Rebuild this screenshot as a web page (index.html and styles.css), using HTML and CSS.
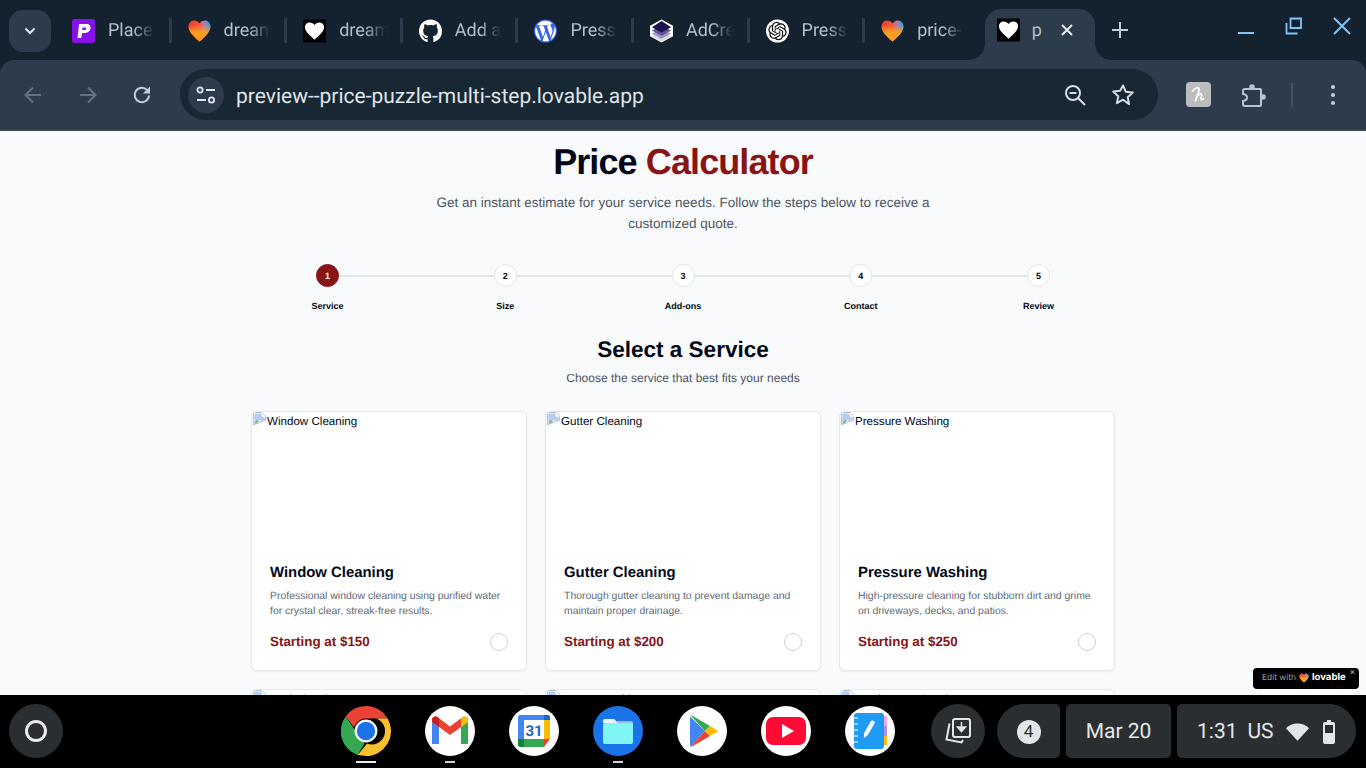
FILE: index.html
```html
<!DOCTYPE html>
<html lang="en">
<head>
<meta charset="utf-8">
<title>Price Calculator</title>
<link rel="stylesheet" href="styles.css">
</head>
<body>
<svg class="defs" width="0" height="0" aria-hidden="true">
  <defs>
    <linearGradient id="lg" x1="0" y1="0" x2="1" y2="0">
      <stop offset="0" stop-color="#ee3a2a"/><stop offset=".5" stop-color="#f2553f"/><stop offset=".72" stop-color="#b57ab8"/><stop offset="1" stop-color="#1fa5dc"/>
    </linearGradient>
    <linearGradient id="lg2" x1="0.5" y1="0" x2="0.5" y2="1">
      <stop offset=".2" stop-color="#f8a020" stop-opacity="0"/><stop offset=".55" stop-color="#f8a020" stop-opacity=".95"/><stop offset="1" stop-color="#fb9a1e"/>
    </linearGradient>
    <symbol id="heart" viewBox="0 0 24 24">
      <path fill="url(#lg)" d="M6.500 1C3 1 .5 3.800.5 7.200c0 4.600 4 9.400 11.500 15.800C19.500 16.600 23.500 11.800 23.500 7.200 23.500 3.800 21 1 17.500 1 15.200 1 13.200 2.200 12 4.100 10.800 2.200 8.800 1 6.500 1Z"/>
      <path fill="url(#lg2)" d="M6.500 1C3 1 .5 3.800.5 7.200c0 4.600 4 9.400 11.500 15.800C19.500 16.600 23.500 11.800 23.500 7.200 23.500 3.800 21 1 17.500 1 15.200 1 13.200 2.200 12 4.100 10.800 2.200 8.800 1 6.500 1Z"/>
    </symbol>
    <symbol id="bwheart" viewBox="0 0 24 24">
      <rect width="24" height="24" fill="#000"/>
      <path fill="#fff" d="M7 3C3.800 3 2 5.300 2 8.200c0 4 4 7.800 10 12.800 6-5 10-8.800 10-12.800C22 5.300 20.200 3 17 3c-2.100 0-3.900 1-5 2.800C10.900 4 9.100 3 7 3Z"/>
    </symbol>
    <symbol id="broken" viewBox="0 0 16 16">
      <path fill="#fff" stroke="#b4b7bc" stroke-width="1" d="M1.500.5h9l4 4v4.500l-5 1-3 2-5 1.500Z"/>
      <path fill="#b3cdf3" d="M2.500 1.500h7.500l.5 3.500 3.200.5v3l-4 1-1.500-1-3 2-2.700.5Z"/>
      <path fill="#7fb36f" d="M2.500 11.500l3-3 2 1.500-3 2-2 .5Z"/>
    </symbol>
  </defs>
</svg>

<header class="browser">
  <div class="tabstrip">
    <div class="tab-search">
      <svg class="chev" viewBox="0 0 12 8" width="12" height="8"><path d="M1.500 1.500 6 6l4.500-4.500" fill="none" stroke="#e3e8ee" stroke-width="2"/></svg>
    </div>
    <div class="tab">
      <svg class="fav" viewBox="0 0 23 24"><rect width="23" height="24" rx="3" fill="#8711e6"/><path fill="#fff" d="M7 5h7.500c3 0 4.500 1.800 4 4.500-.5 2.900-2.800 4.500-5.800 4.500h-2.500l-1 5H5.500L7 5Zm3.700 3.500-.6 2.500h2.300c1 0 1.700-.4 1.900-1.300.1-.8-.4-1.200-1.300-1.200h-2.300Z"/></svg>
      <span class="tab-title">Place</span>
    </div>
    <div class="tab">
      <svg class="fav"><use href="#heart"/></svg>
      <span class="tab-title">dream</span>
    </div>
    <div class="tab">
      <svg class="fav"><use href="#bwheart"/></svg>
      <span class="tab-title">dream</span>
    </div>
    <div class="tab">
      <svg class="fav" viewBox="0 0 16 16"><path fill="#fff" d="M8 0C3.580 0 0 3.580 0 8c0 3.540 2.290 6.530 5.470 7.590.4.070.55-.17.55-.38 0-.19-.01-.82-.01-1.490-2.010.37-2.530-.49-2.690-.94-.09-.23-.48-.94-.82-1.130-.28-.15-.68-.52-.01-.53.630-.01 1.080.58 1.230.82.720 1.210 1.870.87 2.330.66.070-.52.280-.87.510-1.070-1.780-.2-3.640-.89-3.640-3.950 0-.87.310-1.590.82-2.150-.08-.2-.36-1.020.08-2.120 0 0 .67-.21 2.200.82.640-.18 1.320-.27 2-.27s1.360.09 2 .27c1.530-1.040 2.200-.82 2.200-.82.440 1.100.160 1.920.08 2.120.510.560.820 1.270.820 2.150 0 3.070-1.870 3.750-3.650 3.950.290.250.540.730.540 1.480 0 1.070-.010 1.930-.010 2.200 0 .210.150.460.550.380A8.010 8.010 0 0 0 16 8c0-4.420-3.580-8-8-8Z"/></svg>
      <span class="tab-title">Add a</span>
    </div>
    <div class="tab">
      <svg class="fav" viewBox="0 0 24 24"><circle cx="12" cy="12" r="12" fill="#3a66e0"/><path fill="#fff" d="M21.469 6.825c.84 1.537 1.318 3.3 1.318 5.175 0 3.979-2.156 7.456-5.363 9.325l3.295-9.527c.615-1.54.82-2.771.82-3.864 0-.405-.026-.78-.07-1.11m-7.981.105c.647-.03 1.232-.105 1.232-.105.582-.075.514-.93-.067-.899 0 0-1.755.135-2.88.135-1.064 0-2.85-.15-2.85-.15-.585-.03-.661.855-.075.885 0 0 .54.061 1.125.09l1.68 4.605-2.37 7.08L5.354 6.9c.649-.03 1.234-.1 1.234-.1.585-.075.516-.93-.065-.896 0 0-1.746.138-2.874.138-.2 0-.438-.008-.69-.015C4.911 3.15 8.235 1.215 12 1.215c2.809 0 5.365 1.072 7.286 2.833-.046-.003-.091-.009-.141-.009-1.06 0-1.812.923-1.812 1.914 0 .89.513 1.643 1.06 2.531.411.72.89 1.643.89 2.977 0 .915-.354 1.994-.821 3.479l-1.075 3.585-3.9-11.61.001.014zM12 22.784c-1.059 0-2.081-.153-3.048-.437l3.237-9.406 3.315 9.087c.024.053.05.101.078.149-1.12.393-2.325.609-3.582.609M1.211 12c0-1.564.336-3.05.935-4.39L7.29 21.709C3.694 19.96 1.212 16.271 1.21 12"/></svg>
      <span class="tab-title">Press</span>
    </div>
    <div class="tab">
      <svg class="fav" viewBox="0 0 24 24"><path fill="#fff" d="M12 0 24 6.500v11L12 24 0 17.500v-11Z"/><path fill="#dcd8ea" d="M12 23 2 17.500 12 13l10 4.500Z"/><path fill="#9d97c4" d="M12 20 2 14.500 12 10l10 4.500Z"/><path fill="#5e5598" d="M12 17 2 11.500 12 7l10 4.500Z"/><path fill="#1c1250" d="M12 13.500 2 8 12 1.500 22 8Z"/></svg>
      <span class="tab-title">AdCre</span>
    </div>
    <div class="tab">
      <svg class="fav" viewBox="0 0 24 24"><circle cx="12" cy="12" r="12" fill="#fff"/><path transform="translate(2.400 2.400) scale(.8)" fill="#111" d="M22.2819 9.8211a5.9847 5.9847 0 0 0-.5157-4.9108 6.0462 6.0462 0 0 0-6.5098-2.9A6.0651 6.0651 0 0 0 4.9807 4.1818a5.9847 5.9847 0 0 0-3.9977 2.9 6.0462 6.0462 0 0 0 .7427 7.0966 5.98 5.98 0 0 0 .511 4.9107 6.051 6.051 0 0 0 6.5146 2.9001A5.9847 5.9847 0 0 0 13.2599 24a6.0557 6.0557 0 0 0 5.7718-4.2058 5.9894 5.9894 0 0 0 3.9977-2.9001 6.0557 6.0557 0 0 0-.7475-7.0729zm-9.022 12.6081a4.4755 4.4755 0 0 1-2.8764-1.0408l.1419-.0804 4.7783-2.7582a.7948.7948 0 0 0 .3927-.6813v-6.7369l2.02 1.1686a.071.071 0 0 1 .038.052v5.5826a4.504 4.504 0 0 1-4.4945 4.4944zm-9.6607-4.1254a4.4708 4.4708 0 0 1-.5346-3.0137l.142.0852 4.783 2.7582a.7712.7712 0 0 0 .7806 0l5.8428-3.3685v2.3324a.0804.0804 0 0 1-.0332.0615L9.74 19.9502a4.4992 4.4992 0 0 1-6.1408-1.6464zM2.3408 7.8956a4.485 4.485 0 0 1 2.3655-1.9728V11.6a.7664.7664 0 0 0 .3879.6765l5.8144 3.3543-2.0201 1.1685a.0757.0757 0 0 1-.071 0l-4.8303-2.7865A4.504 4.504 0 0 1 2.3408 7.872zm16.5963 3.8558L13.1038 8.364 15.1192 7.2a.0757.0757 0 0 1 .071 0l4.8303 2.7913a4.4944 4.4944 0 0 1-.6765 8.1042v-5.6772a.79.79 0 0 0-.407-.667zm2.0107-3.0231l-.142-.0852-4.7735-2.7818a.7759.7759 0 0 0-.7854 0L9.409 9.2297V6.8974a.0662.0662 0 0 1 .0284-.0615l4.8303-2.7866a4.4992 4.4992 0 0 1 6.6802 4.66zM8.3065 12.863l-2.02-1.1638a.0804.0804 0 0 1-.038-.0567V6.0742a4.4992 4.4992 0 0 1 7.3757-3.4537l-.142.0805L8.704 5.459a.7948.7948 0 0 0-.3927.6813zm1.0976-2.3654l2.602-1.4998 2.6069 1.4998v2.9994l-2.5974 1.4997-2.6067-1.4997Z"/></svg>
      <span class="tab-title">Press</span>
    </div>
    <div class="tab tab-before-active">
      <svg class="fav"><use href="#heart"/></svg>
      <span class="tab-title">price-</span>
    </div>
    <div class="tab-active">
      <svg class="fav"><use href="#bwheart"/></svg>
      <span class="tab-title">p</span>
      <svg class="tab-close" viewBox="0 0 12 12" width="12" height="12"><path d="M1 1l10 10M11 1 1 11" stroke="#e8edf2" stroke-width="2"/></svg>
    </div>
    <svg class="new-tab" viewBox="0 0 16 16" width="16" height="16"><path d="M8 0v16M0 8h16" stroke="#c3cbd3" stroke-width="2"/></svg>
    <div class="win-controls">
      <svg viewBox="0 0 18 18" width="18" height="18"><path d="M1 16h16" stroke="#7fc4f8" stroke-width="2"/></svg>
      <svg viewBox="0 0 18 18" width="18" height="18"><path d="M5.500 1.500h10.500v9.500H5.500ZM1.500 6v10.500h11" fill="none" stroke="#7fc4f8" stroke-width="1.800"/></svg>
      <svg viewBox="0 0 18 18" width="18" height="18"><path d="M1 1l16 16M17 1 1 17" stroke="#7fc4f8" stroke-width="2"/></svg>
    </div>
  </div>

  <div class="toolbar">
    <svg class="nav-icon nav-first" viewBox="0 0 20 20" width="20" height="20"><path d="M18 10H3M10 2.500 2.500 10l7.500 7.500" fill="none" stroke="#66727f" stroke-width="2"/></svg>
    <svg class="nav-icon" viewBox="0 0 20 20" width="20" height="20"><path d="M2 10h15M10 2.500l7.500 7.500-7.500 7.500" fill="none" stroke="#66727f" stroke-width="2"/></svg>
    <svg class="nav-icon nav-reload" viewBox="0 0 20 20" width="20" height="20"><path d="M17 10.500a7.200 7.200 0 1 1-2-5.500" fill="none" stroke="#c3cfda" stroke-width="2"/><path d="M18 1.500v7h-7Z" fill="#c3cfda"/></svg>
    <div class="omnibox">
      <div class="site-info">
        <svg viewBox="0 0 20 18" width="20" height="18"><g fill="none" stroke="#dfe5ea" stroke-width="1.800"><circle cx="4" cy="4" r="2.600"/><circle cx="15.500" cy="14" r="2.600"/><path d="M10 4h9M1 14h9"/></g></svg>
      </div>
      <span class="url">preview--price-puzzle-multi-step.lovable.app</span>
      <svg class="omni-zoom" viewBox="0 0 22 22" width="22" height="22"><circle cx="9" cy="9" r="7" fill="none" stroke="#d6dde3" stroke-width="2"/><path d="M5.500 9h7M14 14l7 7" stroke="#d6dde3" stroke-width="2"/></svg>
      <svg class="omni-star" viewBox="0 0 24 24" width="24" height="24"><path d="M12 2.500l2.900 6.300 6.900.8-5.100 4.700 1.400 6.800L12 16.700l-6.100 3.400 1.400-6.800-5.100-4.700 6.900-.8Z" fill="none" stroke="#d6dde3" stroke-width="2" stroke-linejoin="round"/></svg>
    </div>
    <svg class="ext-k" viewBox="0 0 25 25" width="25" height="25"><rect width="25" height="25" rx="4" fill="#bdbdbd"/><path d="M6.500 9c2-2.500 5.500-4 6.500-2.500 1 2-2 7-3.500 12.500M10 17c1.200-3 3-5 4.500-5s1.200 1.800.7 3.300c-.5 1.700 0 3 2.300 1.700" fill="none" stroke="#fff" stroke-width="1.800" stroke-linecap="round"/></svg>
    <svg class="ext-puzzle" viewBox="0 0 26 24" width="26" height="24"><path d="M5 6h15a1 1 0 0 1 1 1v15a1 1 0 0 1-1 1H5a2 2 0 0 1-2-2v-3c3-.5 4-2 4-3.500S6 11.500 3 11V8a2 2 0 0 1 2-2Z" fill="none" stroke="#b5c5d3" stroke-width="2"/><circle cx="12" cy="4" r="2.800" fill="#b5c5d3"/><circle cx="23" cy="14" r="2.800" fill="#b5c5d3"/></svg>
    <div class="tool-sep"></div>
    <svg class="kebab" viewBox="0 0 4 22" width="4" height="22"><circle cx="2" cy="3" r="2" fill="#c3cfda"/><circle cx="2" cy="11" r="2" fill="#c3cfda"/><circle cx="2" cy="19" r="2" fill="#c3cfda"/></svg>
  </div>
</header>

<main class="page">
  <h1 class="title">Price <span class="title-accent">Calculator</span></h1>
  <p class="subtitle">Get an instant estimate for your service needs. Follow the steps below to receive a<br>customized quote.</p>

  <div class="stepper">
    <div class="step-track">
      <span class="step-dot step-dot-active">1</span><span class="step-line"></span>
      <span class="step-dot">2</span><span class="step-line"></span>
      <span class="step-dot">3</span><span class="step-line"></span>
      <span class="step-dot">4</span><span class="step-line"></span>
      <span class="step-dot">5</span>
    </div>
    <div class="step-labels">
      <span class="step-label">Service</span>
      <span class="step-label">Size</span>
      <span class="step-label">Add-ons</span>
      <span class="step-label">Contact</span>
      <span class="step-label">Review</span>
    </div>
  </div>

  <h2 class="section-title">Select a Service</h2>
  <p class="section-sub">Choose the service that best fits your needs</p>

  <div class="cards">
    <article class="card">
      <div class="card-img"><svg class="broken"><use href="#broken"/></svg>Window Cleaning</div>
      <div class="card-body">
        <h3 class="card-title">Window Cleaning</h3>
        <p class="card-desc">Professional window cleaning using purified water for crystal clear, streak-free results.</p>
        <div class="card-foot"><span class="card-price">Starting at $150</span><span class="radio"></span></div>
      </div>
    </article>
    <article class="card">
      <div class="card-img"><svg class="broken"><use href="#broken"/></svg>Gutter Cleaning</div>
      <div class="card-body">
        <h3 class="card-title">Gutter Cleaning</h3>
        <p class="card-desc">Thorough gutter cleaning to prevent damage and maintain proper drainage.</p>
        <div class="card-foot"><span class="card-price">Starting at $200</span><span class="radio"></span></div>
      </div>
    </article>
    <article class="card">
      <div class="card-img"><svg class="broken"><use href="#broken"/></svg>Pressure Washing</div>
      <div class="card-body">
        <h3 class="card-title">Pressure Washing</h3>
        <p class="card-desc">High-pressure cleaning for stubborn dirt and grime on driveways, decks, and patios.</p>
        <div class="card-foot"><span class="card-price">Starting at $250</span><span class="radio"></span></div>
      </div>
    </article>
    <article class="card">
      <div class="card-img"><svg class="broken"><use href="#broken"/></svg>Roof Cleaning</div>
    </article>
    <article class="card">
      <div class="card-img"><svg class="broken"><use href="#broken"/></svg>Carpet Washing</div>
    </article>
    <article class="card">
      <div class="card-img"><svg class="broken"><use href="#broken"/></svg>Landscape Cleaning</div>
    </article>
  </div>

  <div class="lovable-badge">
    <span class="badge-edit">Edit with</span>
    <svg class="badge-heart"><use href="#heart"/></svg>
    <span class="badge-name">lovable</span>
    <span class="badge-x">×</span>
  </div>
</main>

<footer class="shelf">
  <div class="launcher"><span class="launcher-ring"></span></div>
  <div class="apps">
    <div class="app app-running-wide">
      <svg viewBox="0 0 48 48" width="50" height="50"><path fill="#ea4335" d="M24 0a24 24 0 0 1 20.800 12H24a12 12 0 0 0-11.500 8.500L4.500 10A24 24 0 0 1 24 0Z"/><path fill="#34a853" d="M4.500 10 14 24l8.500 12L16 47A24 24 0 0 1 4.500 10Z"/><path fill="#fbc02d" d="M44.800 12A24 24 0 0 1 24 48l-8-1 9-11a12 12 0 0 0 9-24Z"/><circle cx="24" cy="24" r="11" fill="#fff"/><circle cx="24" cy="24" r="8.800" fill="#1a73e8"/></svg>
    </div>
    <div class="app app-running">
      <svg viewBox="0 0 50 50" width="50" height="50"><circle cx="25" cy="25" r="25" fill="#fff"/><path fill="#4285f4" d="M7 38V16l7 5v17Z"/><path fill="#34a853" d="M36 38V21l7-5v22Z"/><path fill="#ea4335" d="M14 21 7 16v-2c0-3 3.500-4.500 6-2.500l12 9 12-9c2.500-2 6-.5 6 2.500v2l-18 13Z"/><path fill="#c5221f" d="M7 16v-2c0-3 3.500-4.500 6-2.500l1 .8V21Z"/><path fill="#fbbc04" d="M43 16v-2c0-3-3.500-4.500-6-2.500l-1 .8V21Z"/></svg>
    </div>
    <div class="app">
      <svg viewBox="0 0 50 50" width="50" height="50"><circle cx="25" cy="25" r="25" fill="#fff"/><rect x="9" y="9" width="32" height="32" rx="2" fill="#fff"/><path fill="#4285f4" d="M9 11a2 2 0 0 1 2-2h24v5H15v19H9Z"/><path fill="#1967d2" d="M35 9h4a2 2 0 0 1 2 2v3h-6Z"/><path fill="#fbbc04" d="M35 14h6v19h-6Z"/><path fill="#34a853" d="M15 33h20v8H15Z"/><path fill="#188038" d="M9 33h6v8h-4a2 2 0 0 1-2-2Z"/><path fill="#ea4335" d="M35 33h6l-6 8Z"/><text x="25" y="29.500" class="cal-text">31</text></svg>
    </div>
    <div class="app app-running">
      <svg viewBox="0 0 50 50" width="50" height="50"><circle cx="25" cy="25" r="25" fill="#1a73e8"/><path fill="#e8f4fb" d="M10 15a2 2 0 0 1 2-2h9l4 4H10Z"/><path fill="#9fb9ef" d="M24 15h14a2 2 0 0 1 2 2v2H24Z"/><rect x="10" y="17" width="30" height="21" rx="2" fill="#80f5f6"/></svg>
    </div>
    <div class="app">
      <svg viewBox="0 0 50 50" width="50" height="50"><circle cx="25" cy="25" r="25" fill="#fff"/><path fill="#4285f4" d="M13 10.500v29c0 .5.300.900.700 1L28 25Z"/><path fill="#ea4335" d="M13.700 40.500c.4.200.800.100 1.300-.1L33 30l-5-5Z"/><path fill="#34a853" d="M15 9.600c-.5-.3-1-.3-1.300-.1L28 25l5-5Z"/><path fill="#fbbc04" d="M33 20l-5 5 5 5 6.800-3.900c1.200-.7 1.200-1.500 0-2.200Z"/></svg>
    </div>
    <div class="app">
      <svg viewBox="0 0 50 50" width="50" height="50"><circle cx="25" cy="25" r="25" fill="#fff"/><rect x="5" y="11" width="40" height="28" rx="7" fill="#fe0b35"/><path fill="#fff" d="M21 18v14l12-7Z"/></svg>
    </div>
    <div class="app">
      <svg viewBox="0 0 50 50" width="50" height="50"><circle cx="25" cy="25" r="25" fill="#fff"/><rect x="9" y="7" width="30" height="36" rx="3" fill="#1e9bf2"/><path d="M9 12h4M9 18h4M9 24h4M9 30h4M9 36h4" stroke="#bfe3fb" stroke-width="1.500"/><path fill="#f8a8d8" d="M39 10h3v10h-3Z"/><path fill="#b08cf0" d="M39 20h3v10h-3Z"/><path fill="#fbbc04" d="M39 30h3v9h-3Z"/><path fill="#fff" d="M26 15c1.200-1.500 4.500.2 3.800 2l-7 12-4 3 .3-5Z"/></svg>
    </div>
  </div>
  <div class="holding">
    <svg viewBox="0 0 28 28" width="28" height="28"><rect x="9" y="2" width="17" height="18" rx="2" fill="none" stroke="#e3e6e8" stroke-width="2"/><path d="M17.500 5v8M13.500 10l4 4.500 4-4.500Z" fill="#e3e6e8" stroke="#e3e6e8" stroke-width="1.500"/><path d="M5.500 6.500 2.500 22.500l15 3 1.500-2.500" fill="none" stroke="#e3e6e8" stroke-width="2"/></svg>
  </div>
  <div class="tray tray-notif"><span class="notif-count">4</span></div>
  <div class="tray tray-date">Mar 20</div>
  <div class="tray tray-status">
    <span class="status-time">1:31</span><span class="status-lang">US</span>
    <svg class="status-wifi" viewBox="0 0 24 18" width="23" height="18"><path d="M12 18 0 5C3 2 7 0 12 0s9 2 12 5Z" fill="#e3e6e8"/></svg>
    <svg class="status-batt" viewBox="0 0 12 24" width="12" height="24"><path fill="#e3e6e8" d="M4 0h4v2h2a2 2 0 0 1 2 2v18a2 2 0 0 1-2 2H2a2 2 0 0 1-2-2V4a2 2 0 0 1 2-2h2Z"/><rect x="2" y="5" width="8" height="8" fill="#2b2e31"/></svg>
  </div>
</footer>
</body>
</html>
```
FILE: styles.css
```css
* { box-sizing: border-box; }
html, body { margin: 0; padding: 0; height: 100%; overflow: hidden; }
body {
  display: flex;
  flex-direction: column;
  width: 1366px;
  height: 768px;
  font-family: "Liberation Sans", Arial, sans-serif;
  background: #f9fafb;
  color: #020817;
  text-rendering: geometricPrecision;
}
.defs { position: absolute; }

/* browser chrome */
.browser { flex: none; background: #142230; font-family: Roboto, sans-serif; }
.tabstrip { display: flex; align-items: center; height: 60px; padding-left: 9px; }
.tab-search {
  flex: none;
  width: 42px;
  height: 42px;
  margin-top: 1px;
  margin-right: 5px;
  border-radius: 14px;
  background: #2d3c4c;
  display: flex;
  align-items: center;
  justify-content: center;
}
.tab {
  flex: none;
  position: relative;
  display: flex;
  align-items: center;
  gap: 13px;
  width: 115.6px;
  height: 50px;
  margin-top: 1px;
  padding: 0 12px 0 16px;
}
.tab::after {
  content: "";
  position: absolute;
  right: 0;
  top: 12px;
  width: 3px;
  height: 25px;
  background: #2d3c4c;
  border-radius: 1px;
}
.tab-before-active::after { display: none; }
.fav { flex: none; width: 23px; height: 24px; }
.tab-title {
  flex: 1;
  min-width: 0;
  font-size: 18px;
  color: #b4c0cb;
  white-space: nowrap;
  overflow: hidden;
  -webkit-mask-image: linear-gradient(to right, #000 50%, rgba(0, 0, 0, .05) 88%, transparent 100%);
  mask-image: linear-gradient(to right, #000 50%, rgba(0, 0, 0, .05) 88%, transparent 100%);
}
.tab-active {
  flex: none;
  position: relative;
  display: flex;
  align-items: center;
  width: 110px;
  height: 51px;
  margin-top: 9px;
  margin-left: 4px;
  padding: 0 22px 0 12px;
  gap: 12px;
  background: #2d3c4c;
  border-radius: 16px 16px 0 0;
}
.tab-active::before, .tab-active::after {
  content: "";
  position: absolute;
  bottom: 0;
  width: 16px;
  height: 16px;
}
.tab-active::before {
  left: -16px;
  background: radial-gradient(circle at 0 0, transparent 15.5px, #2d3c4c 16px);
}
.tab-active::after {
  right: -16px;
  background: radial-gradient(circle at 100% 0, transparent 15.5px, #2d3c4c 16px);
}
.tab-active .fav { margin-top: -9px; }
.tab-active .tab-title { margin-top: -9px; -webkit-mask-image: none; mask-image: none; }
.tab-close { flex: none; margin-top: -9px; }
.new-tab { flex: none; margin-left: 17px; }
.win-controls { margin-left: auto; display: flex; align-items: center; gap: 30px; padding-right: 15px; margin-top: -8px; }
.toolbar {
  display: flex;
  align-items: center;
  height: 71px;
  background: #2d3c4c;
  border-radius: 14px 14px 0 0;
  border-bottom: 2px solid #3a444e;
  position: relative;
}
.nav-icon { flex: none; margin-right: 35px; }
.nav-first { margin-left: 23px; }
.nav-reload { margin-left: -1px; }
.omnibox {
  flex: none;
  display: flex;
  align-items: center;
  width: 978px;
  height: 51px;
  margin-left: -7px;
  padding: 0 23px 0 8px;
  border-radius: 26px;
  background: #182734;
}
.site-info {
  flex: none;
  width: 36px;
  height: 36px;
  border-radius: 50%;
  background: #2d3c4c;
  display: flex;
  align-items: center;
  justify-content: center;
}
.url { flex: 1; margin-left: 12px; padding-top: 5px; font-size: 21px; color: #dfe5ea; white-space: nowrap; }
.omni-star { margin-left: 25px; }
.ext-k { flex: none; margin-left: 28px; }
.ext-puzzle { flex: none; margin-left: 29px; }
.tool-sep { flex: none; width: 2px; height: 24px; margin-left: 25px; background: #46535f; }
.kebab { flex: none; margin-left: 38px; }

/* page */
.page {
  flex: 1;
  position: relative;
  overflow: hidden;
  display: flex;
  flex-direction: column;
  align-items: center;
  min-height: 0;
  background: #f9fafb;
}
.title {
  flex: none;
  margin: 11px 0 0;
  font-size: 36px;
  line-height: 40px;
  font-weight: 700;
  letter-spacing: -0.9px;
}
.title-accent { color: #881515; }
.subtitle {
  flex: none;
  margin: 10px 0 0;
  font-size: 13.5px;
  line-height: 21px;
  color: #4b5563;
  text-align: center;
}
.stepper { flex: none; width: 734px; margin-top: 30px; }
.step-track { display: flex; align-items: center; }
.step-dot {
  flex: none;
  width: 23px;
  height: 23px;
  border-radius: 50%;
  border: 1.5px solid #e2e4e8;
  background: #fff;
  font-size: 9px;
  font-weight: 700;
  display: flex;
  align-items: center;
  justify-content: center;
}
.step-dot-active { background: #881515; border-color: #881515; color: #fff; }
.step-line { flex: 1; height: 2px; background: #e2e4e8; }
.step-labels { display: flex; justify-content: space-between; margin-top: 12px; }
.step-label {
  flex: none;
  width: 23px;
  display: flex;
  justify-content: center;
  white-space: nowrap;
  font-size: 9px;
  line-height: 14px;
  font-weight: 700;
}
.section-title { flex: none; margin: 22px 0 0; font-size: 22.5px; line-height: 30px; font-weight: 700; }
.section-sub { flex: none; margin: 4px 0 0; font-size: 12px; line-height: 18px; color: #4b5563; }
.cards {
  flex: none;
  display: grid;
  grid-template-columns: repeat(3, 276px);
  gap: 18px;
  margin-top: 24px;
}
.card {
  height: 260px;
  background: #fff;
  border: 1px solid #e5e7eb;
  border-radius: 6px;
  box-shadow: 0 1px 2px rgba(0, 0, 0, .06);
  overflow: hidden;
}
.card-img { height: 133px; font-size: 11.6px; line-height: 20px; color: #020817; }
.broken { width: 15px; height: 15px; vertical-align: top; }
.card-body { padding: 18px; }
.card-title { margin: 0; font-size: 14.9px; line-height: 20px; font-weight: 700; }
.card-desc { margin: 6px 0 0; font-size: 10.45px; line-height: 15px; color: #616a78; }
.card-foot { display: flex; align-items: center; justify-content: space-between; margin-top: 12px; }
.card-price { font-size: 13.4px; font-weight: 700; color: #881515; }
.radio { width: 18px; height: 18px; margin-top: 2px; border-radius: 50%; border: 1px solid #cfd3d9; background: #fff; }
.lovable-badge {
  position: absolute;
  right: 7px;
  bottom: 6px;
  display: flex;
  align-items: center;
  width: 106px;
  height: 21px;
  padding: 0 0 2px 9px;
  border-radius: 4px;
  background: #000;
}
.badge-edit { font-size: 8.4px; color: #a0a0a0; white-space: nowrap; font-family: Inter, sans-serif; }
.badge-heart { width: 10px; height: 10px; margin: 0 3px; flex: none; }
.badge-name { font-size: 9.6px; font-weight: 700; color: #fff; font-family: Inter, sans-serif; }
.badge-x { position: absolute; right: 4px; top: 0; font-size: 9px; line-height: 9px; color: #c8c8c8; }

/* shelf */
.shelf {
  flex: none;
  display: flex;
  align-items: center;
  height: 73px;
  padding: 0 10px 2px 9px;
  background: #000;
  font-family: Roboto, sans-serif;
  color: #e3e6e8;
}
.launcher {
  flex: none;
  width: 54px;
  height: 54px;
  border-radius: 50%;
  background: #2b2e31;
  display: flex;
  align-items: center;
  justify-content: center;
}
.launcher-ring { width: 22px; height: 22px; border-radius: 50%; border: 3px solid #e8eaed; }
.apps { flex: none; display: flex; gap: 34px; margin-left: 278px; }
.app { position: relative; width: 50px; height: 50px; }
.app svg { display: block; }
.app-running::after, .app-running-wide::after {
  content: "";
  position: absolute;
  left: 50%;
  bottom: -7px;
  width: 10px;
  height: 2px;
  margin-left: -5px;
  background: #c6d4e0;
}
.app-running-wide::after { width: 20px; margin-left: -10px; background: #e8eaed; }
.cal-text { font: 700 15px "Roboto", sans-serif; fill: #1967d2; text-anchor: middle; }
.holding {
  flex: none;
  width: 54px;
  height: 54px;
  margin-left: 36px;
  border-radius: 50%;
  background: #2b2e31;
  display: flex;
  align-items: center;
  justify-content: center;
}
.tray {
  flex: none;
  height: 54px;
  padding-top: 2px;
  display: flex;
  align-items: center;
  justify-content: center;
  background: #2b2e31;
  font-size: 21px;
  border-radius: 5px;
}
.tray-notif { width: 63px; margin-left: 12px; border-radius: 27px 5px 5px 27px; }
.notif-count {
  width: 24px;
  height: 24px;
  border-radius: 50%;
  background: #e3e6e8;
  color: #2b2e31;
  font-size: 17px;
  display: flex;
  align-items: center;
  justify-content: center;
}
.tray-date { width: 105px; margin-left: 6px; }
.tray-status { width: 179px; margin-left: 6px; justify-content: flex-start; padding-left: 20px; border-radius: 5px 27px 27px 5px; }
.status-lang { margin-left: 10px; }
.status-wifi { margin-left: 12px; }
.status-batt { margin-left: 14px; }
```
